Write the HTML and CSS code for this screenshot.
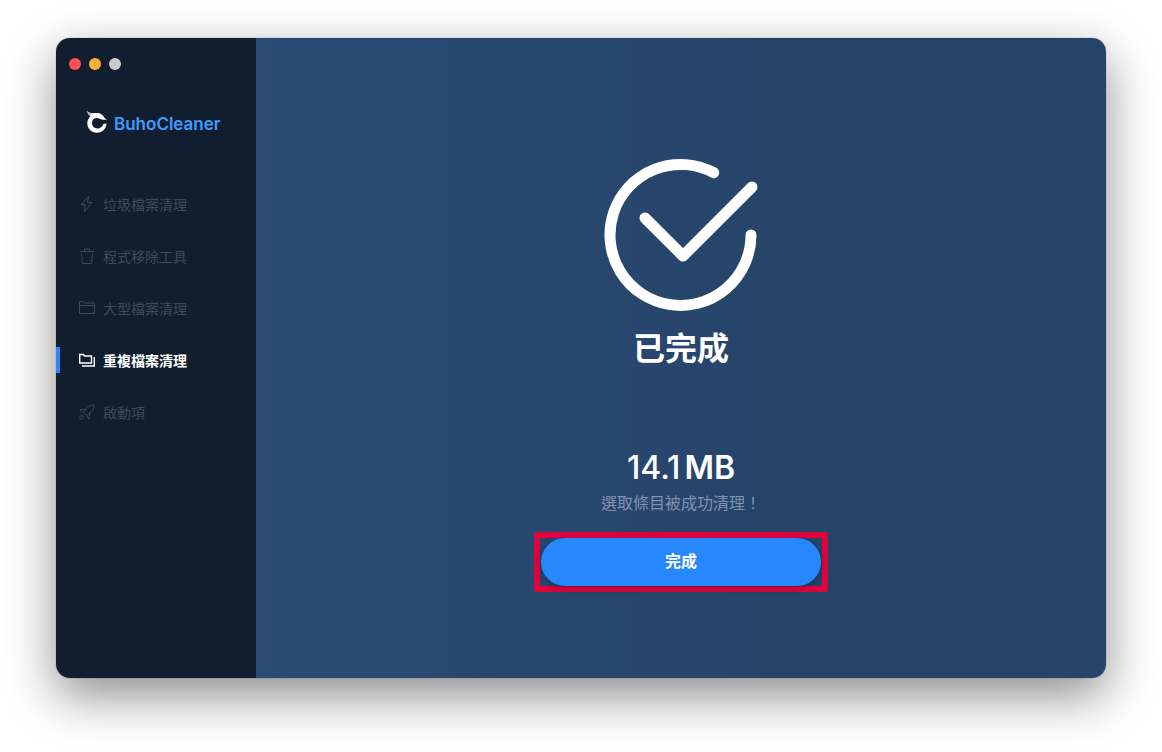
FILE: index.html
```html
<!DOCTYPE html>
<html lang="zh-Hant">
	<head>
		<meta charset="UTF-8">
		<title>BuhoCleaner</title>
		<link rel="stylesheet" href="styles.css">
	</head>

	<body>

		<div class="window">

			<aside class="sidebar">
				<div class="controls">
					<button class="dot close" aria-label="關閉"></button>
					<button class="dot minimize" aria-label="縮小"></button>
					<button class="dot zoom" aria-label="縮放" disabled></button>
				</div>

				<div class="brand">
					<svg class="logo" width="22" height="24" viewBox="0 0 22 24" fill="#fff">
						<path opacity="0.7" d="M0.500 0.500C3 3 6 3.200 10 3L7 6.500L4.200 6.500C2.500 5 1.200 3 0.500 0.500Z"/>
						<path d="M5 4C8 3.200 10 2.800 12 3C15 3.400 17.500 5.500 18.500 8L20.800 9.500C17 10.600 15 9 12 8.200C8.500 7.600 6 9.800 6 12.800C6 16.300 8.400 18.500 11.300 18.500C14.200 18.500 16.400 16.800 17.200 14L20.600 13.500C20.200 19 16 22.800 11 22.800C5.500 22.800 1.300 18.800 1.300 13.300C1.300 10.300 2.500 8.300 4.200 6.500Z"/>
					</svg>
					<span class="name">BuhoCleaner</span>
				</div>

				<nav class="menu">
					<a class="item" href="#junk">
						<svg class="icon" viewBox="0 0 16 16"><path d="M9.500 0.500L2.500 8.500H6L5.500 15.500L13 6.500H8.500Z"/></svg>
						垃圾檔案清理
					</a>
					<a class="item" href="#uninstall">
						<svg class="icon" viewBox="0 0 16 16"><path d="M1 3.500H15M5.500 3.500V1H10.500V3.500M2.500 5.500L3.500 15.500H12.500L13.500 5.500"/></svg>
						程式移除工具
					</a>
					<a class="item" href="#large">
						<svg class="icon" viewBox="0 0 16 16"><path d="M0.500 13.500V1.500H4.500L5.500 3H15.500V13.500ZM0.500 5.500H15.500"/></svg>
						大型檔案清理
					</a>
					<a class="item active" href="#duplicate">
						<svg class="icon" viewBox="0 0 16 16"><path d="M0.700 11V2.500H4.500L5.500 4H12.500V11ZM15.300 5V14H3"/></svg>
						重複檔案清理
					</a>
					<a class="item" href="#startup">
						<svg class="icon" viewBox="0 0 16 16"><path d="M15 1C10.500 1 9 2.500 4.500 8.500L7.500 11.500C13.500 7 15 5.500 15 1ZM7 5.500H3.500L0.800 6L4.500 8.500M10.500 9V12.500L10 15.200L7.500 11.500"/><circle cx="2.500" cy="13.500" r="1.800"/></svg>
						啟動項
					</a>
				</nav>
			</aside>

			<main class="result">
				<svg class="check" width="156" height="156" viewBox="0 0 156 156">
					<path d="M110.700 15.700A70.500 70.500 0 1 0 148 78"/>
					<path d="M42 61L80 99L149 30"/>
				</svg>
				<h1 class="title">已完成</h1>
				<p class="amount">14.1<strong>MB</strong></p>
				<p class="note">選取條目被成功清理！</p>
				<div class="highlight">
					<button class="done">完成</button>
				</div>
			</main>

		</div>

	</body>

</html>
```

FILE: styles.css
```css
* { margin: 0; padding: 0; box-sizing: border-box }

body {
	min-height: 100vh;
	padding: 38px 56px 74px;
	display: flex;
	background: #fff;
	font-family: Inter, "Noto Sans CJK TC", sans-serif;
}

.window {
	flex: 1;
	display: flex;
	border-radius: 14px;
	overflow: hidden;
	box-shadow: 0 0 1px rgba(0, 0, 0, 0.6), 0 18px 50px rgba(0, 0, 0, 0.45);
}

.sidebar {
	width: 200px;
	flex: none;
	background: #111e2f;
}

.controls {
	display: flex;
	gap: 8px;
	padding: 20px 13px 0;
}

.dot {
	width: 12px;
	height: 12px;
	border: 0;
	border-radius: 50%;
}
.close { background: #ff5153 }
.minimize { background: #ffb03a }
.zoom { background: #cbcbcb }

.brand {
	display: flex;
	align-items: center;
	gap: 6px;
	margin-top: 38px;
	padding-left: 30px;
	color: #3d9bff;
	font-size: 17px;
	font-weight: 600;
	line-height: 24px;
}
.name { padding-top: 4px }

.menu { margin-top: 55px }

.item {
	height: 26px;
	margin-bottom: 26px;
	padding-left: 19px;
	border-left: 4px solid transparent;
	display: flex;
	align-items: center;
	gap: 8px;
	color: #3d495d;
	font-size: 14px;
	text-decoration: none;
}

.item.active {
	border-color: #2688fb;
	color: #fff;
	font-weight: 700;
}

.icon {
	width: 16px;
	height: 16px;
	fill: none;
	stroke: currentColor;
}
.active .icon { stroke-width: 1.4 }

.result {
	flex: 1;
	display: flex;
	flex-direction: column;
	align-items: center;
	padding-top: 119px;
	background: linear-gradient(90deg, #284a73, #28466d 50%, #254468 60%, #264467);
	color: #fff;
}

.check {
	fill: none;
	stroke: #fff;
	stroke-width: 11;
	stroke-linecap: round;
	stroke-linejoin: round;
}

.title {
	margin-top: 12px;
	font-size: 32px;
	font-weight: 700;
	line-height: 48px;
}

.amount {
	margin-top: 75px;
	font-size: 32px;
	font-weight: 500;
	line-height: 40px;
}
.amount strong { margin-left: 4px; font-weight: 600 }

.note {
	margin-top: 3px;
	color: #8290b2;
	font-size: 16px;
	line-height: 24px;
}

.highlight {
	margin-top: 17px;
	padding: 0 1px;
	border: 6px solid #df043d;
	border-radius: 3px;
}

.done {
	width: 280px;
	height: 48px;
	padding-bottom: 4px;
	display: block;
	border: 0;
	border-radius: 24px;
	background: #2688fb;
	box-shadow: 0 2px 6px rgba(0, 0, 0, 0.3);
	color: #fff;
	font: inherit;
	font-size: 16px;
	font-weight: 700;
}
```
